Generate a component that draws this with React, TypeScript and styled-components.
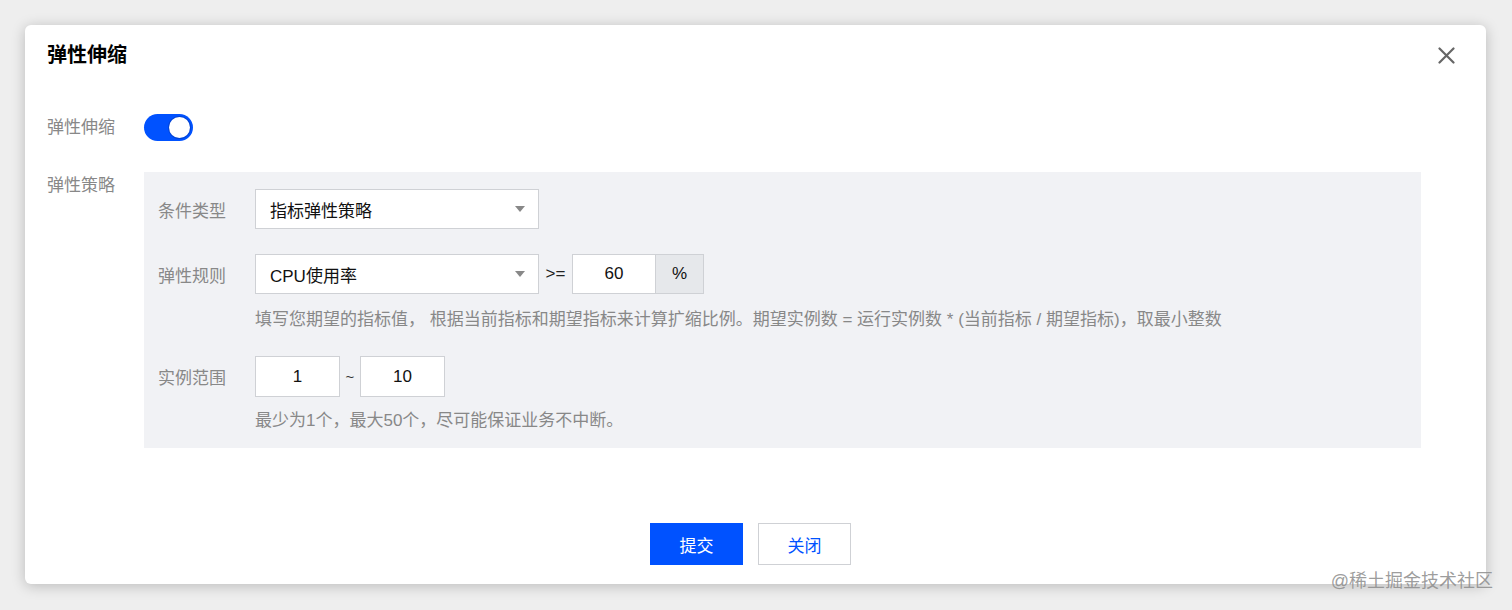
import React from 'react'
import styled, { createGlobalStyle } from 'styled-components'

const GlobalStyle = createGlobalStyle`
  html, body {
    margin: 0;
    padding: 0;
    background: #eeeeee;
    font-family: "Liberation Sans", "Noto Sans CJK SC", sans-serif;
  }
`

const Page = styled.div`
  position: relative;
  width: 1512px;
  height: 610px;
  padding: 25px 26px 0 25px;
  box-sizing: border-box;
  overflow: hidden;
`

const Dialog = styled.div`
  background: #fff;
  border-radius: 6px;
  box-shadow: 0 2px 14px rgba(0, 0, 0, 0.22);
  padding: 0 22px 19px;
  display: flex;
  flex-direction: column;
`

const Header = styled.div`
  display: flex;
  align-items: center;
  justify-content: space-between;
  padding: 18px 8px 0 0;
  height: 24px;
`

const Title = styled.h2`
  margin: 0;
  font-size: 20px;
  line-height: 24px;
  font-weight: 700;
  color: #000;
`

const CloseButton = styled.button`
  border: 0;
  background: none;
  padding: 0;
  width: 20px;
  height: 20px;
  display: flex;
  align-items: center;
  justify-content: center;
  cursor: pointer;
`

const FormRow = styled.div<{ $top: number }>`
  display: flex;
  align-items: flex-start;
  margin-top: ${(p) => p.$top}px;
`

const FormLabel = styled.div<{ $lh: number }>`
  width: 97px;
  flex: none;
  font-size: 17px;
  line-height: ${(p) => p.$lh}px;
  color: #888;
`

const Toggle = styled.div<{ $on: boolean }>`
  width: 49px;
  height: 27px;
  border-radius: 14px;
  background: ${(p) => (p.$on ? '#0052ff' : '#ccc')};
  position: relative;
  box-sizing: border-box;

  &::after {
    content: '';
    position: absolute;
    top: 3px;
    left: ${(p) => (p.$on ? '25px' : '3px')};
    width: 21px;
    height: 21px;
    border-radius: 50%;
    background: #fff;
    box-shadow: 0 0 0 1px rgba(0, 40, 140, 0.35);
  }
`

const Panel = styled.div`
  flex: 1;
  margin-right: 43px;
  background: #f1f2f5;
  padding: 17px 14px 17px;
  display: flex;
  flex-direction: column;
`

const Field = styled.div<{ $top?: number }>`
  display: flex;
  flex-direction: column;
  margin-top: ${(p) => p.$top ?? 0}px;
`

const FieldLine = styled.div`
  display: flex;
  align-items: center;
`

const FieldLabel = styled.div`
  width: 97px;
  flex: none;
  font-size: 17px;
  color: #888;
`

const Select = styled.div<{ $w: number }>`
  width: ${(p) => p.$w}px;
  height: 40px;
  box-sizing: border-box;
  background: #fff;
  border: 1px solid #cfd1d5;
  display: flex;
  align-items: center;
  justify-content: space-between;
  padding: 0 13px 0 14px;
  font-size: 17px;
  color: #111;
`

const Caret = styled.span`
  width: 0;
  height: 0;
  border-left: 5px solid transparent;
  border-right: 5px solid transparent;
  border-top: 6px solid #888;
`

const Operator = styled.span`
  width: 33px;
  text-align: center;
  font-size: 17px;
  color: #222;
`

const NumberBox = styled.div<{ $w: number; $h?: number }>`
  width: ${(p) => p.$w}px;
  height: ${(p) => p.$h ?? 40}px;
  box-sizing: border-box;
  background: #fff;
  border: 1px solid #cfd1d5;
  display: flex;
  align-items: center;
  justify-content: center;
  font-size: 17px;
  color: #111;
`

const Addon = styled.div`
  width: 48px;
  height: 40px;
  box-sizing: border-box;
  background: #e6e8eb;
  border: 1px solid #cfd1d5;
  border-left: 0;
  display: flex;
  align-items: center;
  justify-content: center;
  font-size: 17px;
  color: #111;
`

const Tilde = styled.span`
  width: 20px;
  text-align: center;
  font-size: 15px;
  color: #333;
`

const Help = styled.div<{ $top: number }>`
  margin: ${(p) => p.$top}px 0 0 97px;
  font-size: 17px;
  line-height: 20px;
  color: #888;
`

const Footer = styled.div`
  display: flex;
  justify-content: center;
  gap: 15px;
  margin-top: 75px;
  padding-right: 10px;
`

const Button = styled.button<{ $primary?: boolean }>`
  width: 93px;
  height: 42px;
  box-sizing: border-box;
  font-family: inherit;
  font-size: 17px;
  cursor: pointer;
  border: 1px solid ${(p) => (p.$primary ? '#0052ff' : '#cfd1d5')};
  background: ${(p) => (p.$primary ? '#0052ff' : '#fff')};
  color: ${(p) => (p.$primary ? '#fff' : '#0052ff')};
`

const Watermark = styled.div`
  position: absolute;
  right: 19px;
  bottom: 18px;
  font-size: 18px;
  line-height: 22px;
  color: rgba(140, 140, 140, 0.85);
`

export default function App() {
  return (
    <>
      <GlobalStyle />
      <Page>
        <Dialog>
          <Header>
            <Title>弹性伸缩</Title>
            <CloseButton aria-label="close">
              <svg width="17" height="17" viewBox="0 0 17 17">
                <path d="M1.5 1.5 L15.5 15.5 M15.5 1.5 L1.5 15.5" stroke="#666" strokeWidth="2.2" strokeLinecap="round" />
              </svg>
            </CloseButton>
          </Header>

          <FormRow $top={47}>
            <FormLabel $lh={27}>弹性伸缩</FormLabel>
            <Toggle $on />
          </FormRow>

          <FormRow $top={31}>
            <FormLabel $lh={27}>弹性策略</FormLabel>
            <Panel>
              <Field>
                <FieldLine>
                  <FieldLabel>条件类型</FieldLabel>
                  <Select $w={284}>
                    指标弹性策略
                    <Caret />
                  </Select>
                </FieldLine>
              </Field>

              <Field $top={25}>
                <FieldLine>
                  <FieldLabel>弹性规则</FieldLabel>
                  <Select $w={284}>
                    CPU使用率
                    <Caret />
                  </Select>
                  <Operator>&gt;=</Operator>
                  <NumberBox $w={84}>60</NumberBox>
                  <Addon>%</Addon>
                </FieldLine>
                <Help $top={16}>
                  填写您期望的指标值， 根据当前指标和期望指标来计算扩缩比例。期望实例数 = 运行实例数 * (当前指标 / 期望指标)，取最小整数
                </Help>
              </Field>

              <Field $top={26}>
                <FieldLine>
                  <FieldLabel>实例范围</FieldLabel>
                  <NumberBox $w={85} $h={41}>1</NumberBox>
                  <Tilde>~</Tilde>
                  <NumberBox $w={85} $h={41}>10</NumberBox>
                </FieldLine>
                <Help $top={14}>最少为1个，最大50个，尽可能保证业务不中断。</Help>
              </Field>
            </Panel>
          </FormRow>

          <Footer>
            <Button $primary>提交</Button>
            <Button>关闭</Button>
          </Footer>
        </Dialog>
        <Watermark>@稀土掘金技术社区</Watermark>
      </Page>
    </>
  )
}
